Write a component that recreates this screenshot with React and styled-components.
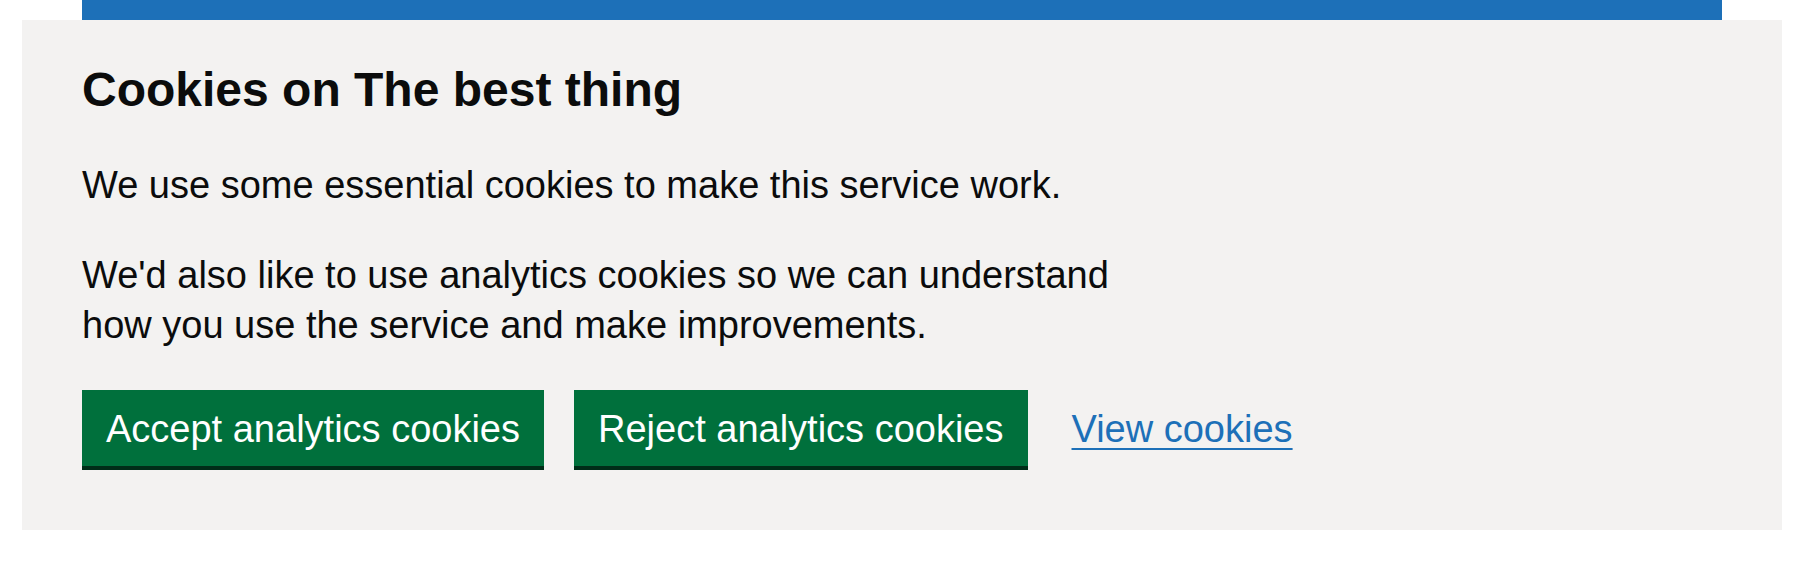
import styled, { createGlobalStyle } from 'styled-components'

const GlobalStyle = createGlobalStyle`
	body {
		margin: 0;
		background: #fff;
		font-family: "Liberation Sans", Arial, sans-serif;
		color: #0b0c0c;
	}
`

const buttons = ['Accept analytics cookies', 'Reject analytics cookies']

const App = () => {
	return (
		<>
			<GlobalStyle />
			<Page>
				<TopBar />
				<Banner>
					<Message>
						<Heading>Cookies on The best thing</Heading>
						<Body>We use some essential cookies to make this service work.</Body>
						<Body>We'd also like to use analytics cookies so we can understand how you use the service and make improvements.</Body>
					</Message>
					<ButtonGroup>
						{buttons.map((item, index) => (
							<Button type="button" key={item + index}>{item}</Button>
						))}
						<Link href="#">View cookies</Link>
					</ButtonGroup>
				</Banner>
			</Page>
		</>
	)
}

export default App

const Page = styled.div`
	padding: 0 24px 0 22px;
`

const TopBar = styled.div`
	height: 20px;
	margin: 0 60px;
	background: #1d70b8;
`

const Banner = styled.div`
	padding: 40px 60px 64px;
	background: #f3f2f1;
`

const Message = styled.div`
	max-width: 1073px;
`

const Heading = styled.h2`
	margin: 0 0 40px;
	font-size: 48px;
	line-height: 60px;
	font-weight: 700;
	color: #0b0c0c;
`

const Body = styled.p`
	margin: 0 0 40px;
	font-size: 38px;
	line-height: 50px;
	color: #0b0c0c;
`

const ButtonGroup = styled.div`
	display: flex;
	align-items: baseline;
`

const Button = styled.button`
	margin: 0 30px 0 0;
	padding: 20px 24px 18px;
	border: 0;
	border-radius: 0;
	font-family: inherit;
	font-size: 38px;
	line-height: 38px;
	color: #fff;
	background: #00703c;
	box-shadow: 0 4px 0 #002d18;
	cursor: pointer;
`

const Link = styled.a`
	margin-left: 14px;
	font-size: 38px;
	line-height: 50px;
	color: #1d70b8;
	text-decoration: underline;
	text-decoration-thickness: 2px;
	text-underline-offset: 0.1578em;
`
